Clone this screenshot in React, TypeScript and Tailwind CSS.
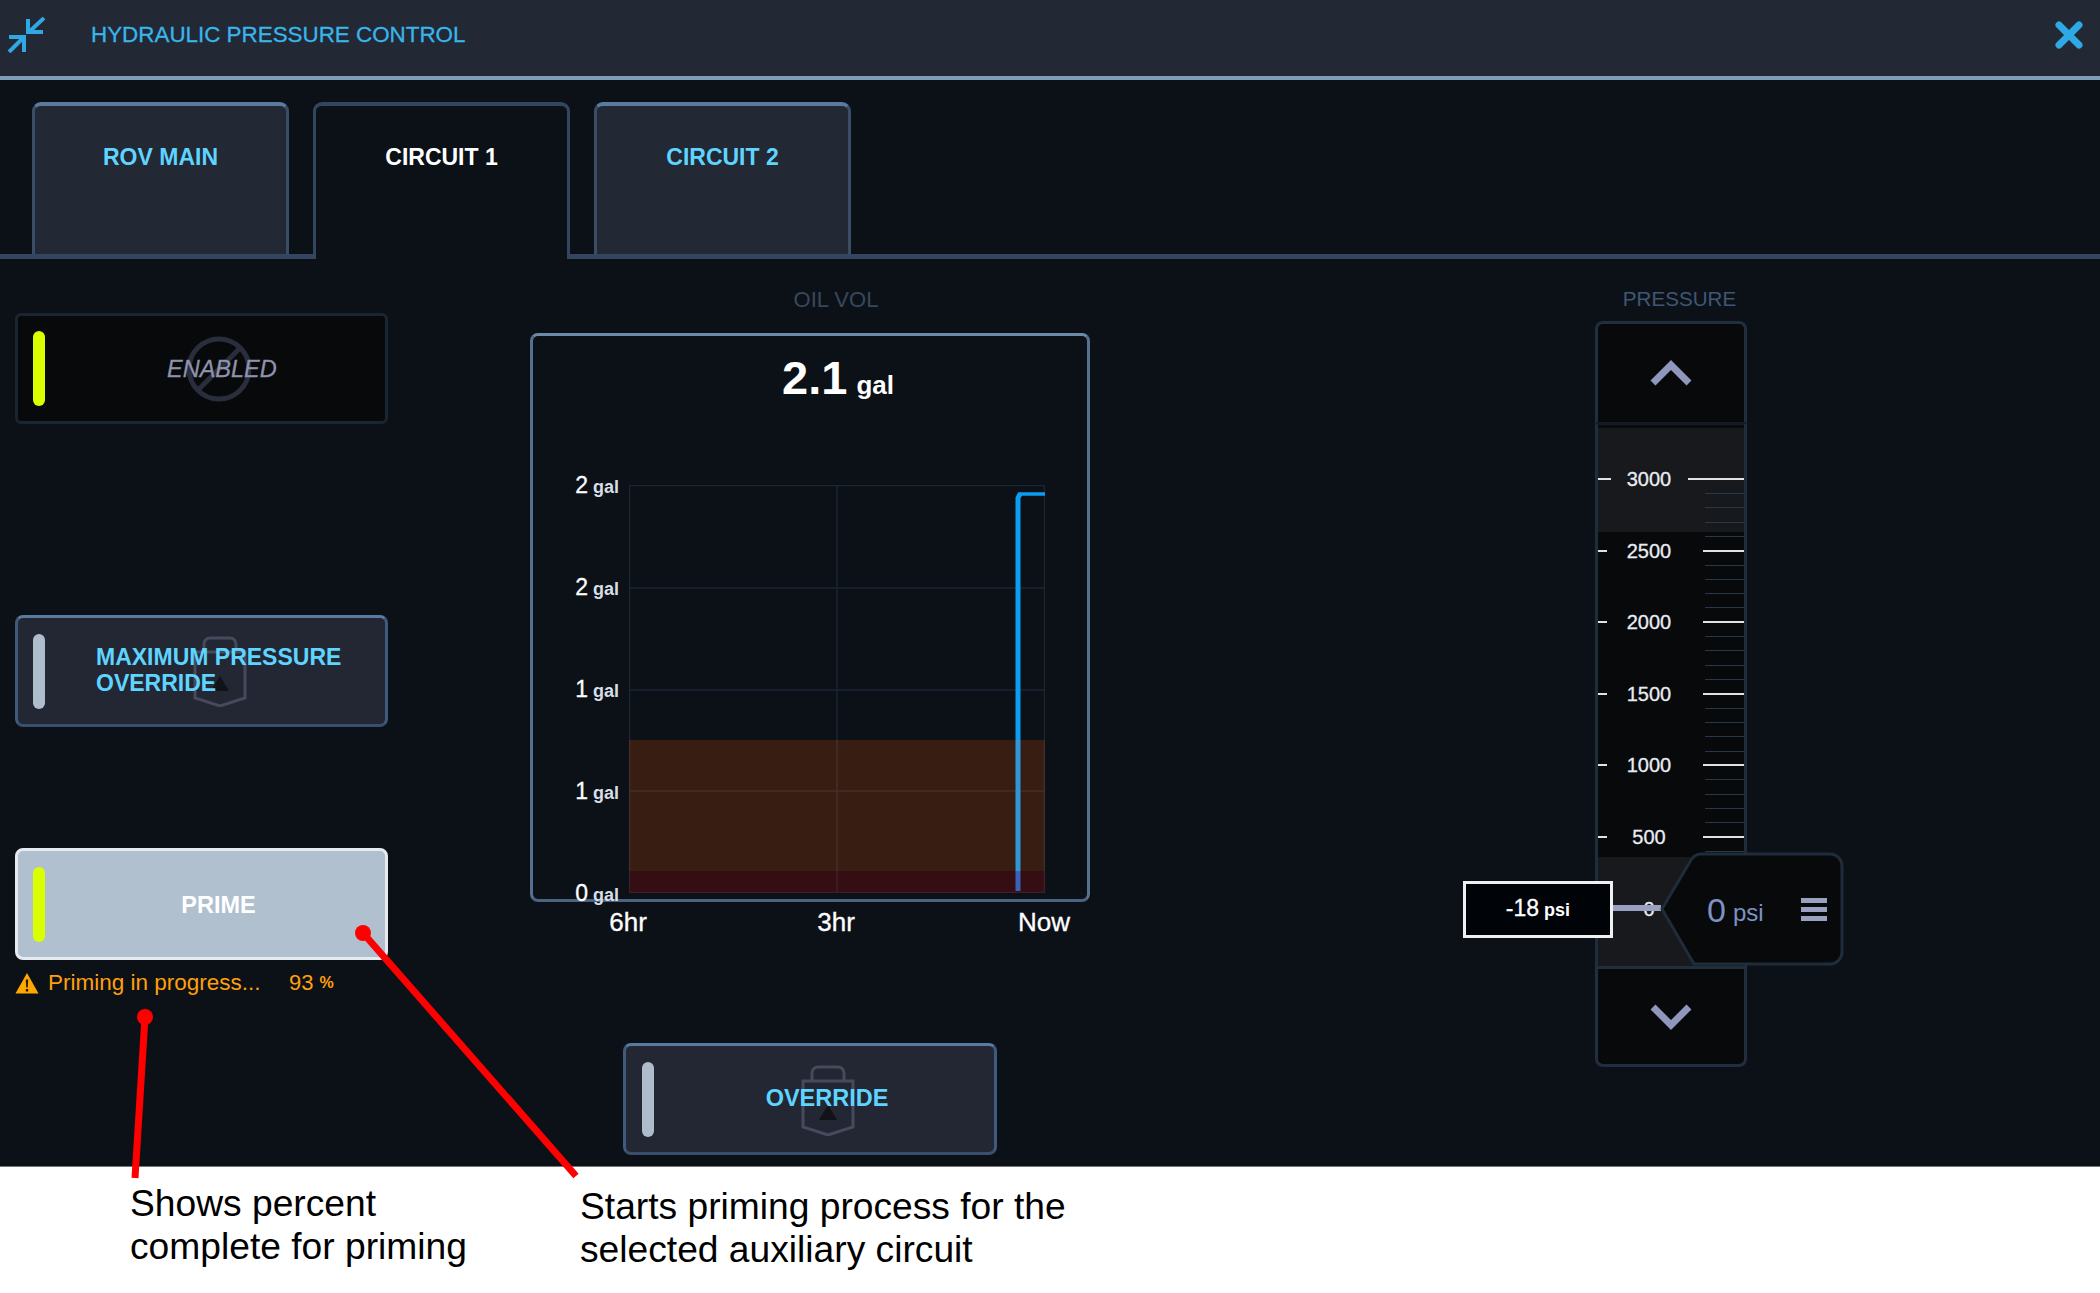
const ticks = Array.from({ length: 31 }, (_, i) => (i % 5 === 0 ? 3000 - i * 100 : null));

// ---------------------------------------------------------------------------
// Shared bits
// ---------------------------------------------------------------------------

function LockIcon({ className }: { className: string }) {
  return (
    <svg className={className} viewBox="0 0 56 72" fill="none">
      <path d="M12 17V9a6 6 0 0 1 6-6h20a6 6 0 0 1 6 6v8" stroke="#464a5c" strokeWidth="3" />
      <path d="M3 17h50v46l-25 8-25-8z" stroke="#464a5c" strokeWidth="3" />
      <path d="M28 41l9 15H19z" fill="#111318" />
    </svg>
  );
}

function Tab({ label, active }: { label: string; active?: boolean }) {
  return active ? (
    <div className="-mb-[5px] h-[157px] w-[257px] rounded-t-[9px] border-x-[3px] border-t-[4px] border-[#34465f] bg-[#0c1118] pt-[39px] text-center text-[23px] font-bold leading-6 text-white">
      {label}
    </div>
  ) : (
    <div className="h-[152px] w-[257px] rounded-t-[9px] border-x-[3px] border-t-[4px] border-x-[#3a4d66] border-t-[#5a7b9e] bg-[#222834] pt-[39px] text-center text-[23px] font-bold leading-6 text-[#5fd4ff]">
      {label}
    </div>
  );
}

function Indicator({ on }: { on?: boolean }) {
  return <div className={`h-[75px] w-3 shrink-0 rounded-full ${on ? 'bg-[#d9ff00]' : 'bg-[#aebccb]'}`} />;
}

// ---------------------------------------------------------------------------
// Left column
// ---------------------------------------------------------------------------

function LeftColumn() {
  return (
    <div className="ml-[15px] w-[373px] shrink-0 pt-[54px]">
      <div className="relative flex h-[111px] items-center rounded-[6px] border-[3px] border-[#1b2431] bg-[#08090b] pl-[15px]">
        <Indicator on />
        <svg className="absolute left-[168px] top-[20px] h-[66px] w-[66px]" viewBox="0 0 66 66" fill="none">
          <circle cx="33" cy="33" r="30" stroke="#292d3c" strokeWidth="5" />
          <path d="M54 12L12 54" stroke="#292d3c" strokeWidth="5" />
        </svg>
        <span className="absolute left-[149px] top-[41px] text-[23.5px] italic leading-6 text-[#8f92ab] [-webkit-text-stroke:0.3px_#8f92ab]">ENABLED</span>
      </div>

      <div className="relative mt-[191px] flex h-[112px] items-center rounded-[8px] border-[3px] border-t-[#587ba0] border-x-[#3f5a7c] border-b-[#3a4f6e] bg-[#222733] pl-[15px]">
        <Indicator />
        <LockIcon className="absolute left-[174px] top-[17px] h-[72px] w-[56px]" />
        <span className="absolute left-[78px] top-[26px] text-[23px] font-bold leading-[26px] text-[#5fd4ff]">
          MAXIMUM PRESSURE
          <br />
          OVERRIDE
        </span>
      </div>

      <div className="relative mt-[121px] flex h-[112px] items-center rounded-[8px] border-[3px] border-[#e6ebf0] bg-[#b0c0cf] pl-[15px]">
        <Indicator on />
        <span className="absolute inset-x-0 top-[42px] pl-[34px] text-center text-[23.5px] font-bold leading-6 text-white">PRIME</span>
      </div>

      <div className="mt-[10px] flex h-[26px] items-center text-[#ff9f0a]">
        <svg className="h-[22px] w-[24px] shrink-0" viewBox="0 0 24 22">
          <path d="M12 1L23.5 21.5H.5z" fill="#ffa800" />
          <path d="M10.8 7.5h2.4l-.4 8h-1.6zM10.8 17h2.4v2.4h-2.4z" fill="#2a1c00" />
        </svg>
        <span className="ml-[9px] w-[241px] text-[22.5px] leading-none">Priming in progress...</span>
        <span className="text-[22px] leading-none">93</span>
        <span className="ml-[6px] text-[16px] font-bold leading-none">%</span>
      </div>
    </div>
  );
}

// ---------------------------------------------------------------------------
// Oil volume chart
// ---------------------------------------------------------------------------

function YLabel({ value }: { value: string }) {
  return (
    <div className="flex h-0 items-center justify-end text-white">
      <span className="text-[23px] [-webkit-text-stroke:0.3px_#ffffff]">{value}</span>
      <span className="ml-[5px] mt-[4px] text-[18px] font-bold text-[#d8dde6]">gal</span>
    </div>
  );
}

function OilChart() {
  return (
    <div className="ml-[142px] w-[560px] shrink-0">
      <div className="mt-[29px] h-[23px] pl-[52px] text-center text-[22px] leading-6 text-[#38475c]">OIL VOL</div>
      <div className="mt-[22px] h-[569px] rounded-[8px] border-[3px] border-t-[#6d8aa8] border-x-[#56718f] border-b-[#4a6380] bg-[#0c1118]">
        <div className="flex h-[149px] items-baseline justify-center pl-[56px] pt-[12px] font-bold leading-[60px] text-white">
          <span className="text-[47px]">2.1</span>
          <span className="ml-[9px] text-[26px]">gal</span>
        </div>
        <div className="flex h-[408px]">
          <div className="flex w-[86px] shrink-0 flex-col justify-between">
            <YLabel value="2" />
            <YLabel value="2" />
            <YLabel value="1" />
            <YLabel value="1" />
            <YLabel value="0" />
          </div>
          <svg className="ml-[10px] h-[408px] w-[416px] shrink-0" viewBox="0 0 416 408" fill="none">
            <path
              d="M0.5 0.5H415.5V407.5H0.5ZM0 103H416M0 205H416M0 306H416M208 0V408"
              stroke="#1a2633"
              strokeWidth="1.5"
            />
            <rect y="255" width="416" height="131" fill="rgba(255,87,2,0.185)" />
            <rect y="386" width="416" height="22" fill="rgba(255,0,0,0.17)" />
            <path d="M389 255V13L391 9" stroke="#0c9cf2" strokeWidth="5" />
            <path d="M389 9H416" stroke="#0c9cf2" strokeWidth="3.5" />
            <path d="M389 386V255" stroke="#2f97d8" strokeWidth="5" />
            <path d="M389 406V386" stroke="#3a62b8" strokeWidth="5" />
          </svg>
        </div>
      </div>
      <div className="ml-[98px] flex h-[40px] w-[416px] items-center justify-between text-[26px] leading-none text-white [-webkit-text-stroke:0.3px_#ffffff]">
        <div className="flex w-0 justify-center">6hr</div>
        <div className="flex w-0 justify-center">3hr</div>
        <div className="flex w-0 justify-center">Now</div>
      </div>
      <div className="relative ml-[93px] mt-[101px] flex h-[112px] w-[374px] items-center rounded-[8px] border-[3px] border-t-[#587ba0] border-x-[#3f5a7c] border-b-[#3a4f6e] bg-[#222733] pl-[16px]">
        <Indicator />
        <LockIcon className="absolute left-[174px] top-[18px] h-[72px] w-[56px]" />
        <span className="absolute inset-x-0 top-[40px] pl-[34px] text-center text-[23.5px] font-bold leading-6 text-[#5fd4ff]">OVERRIDE</span>
      </div>
    </div>
  );
}

// ---------------------------------------------------------------------------
// Pressure gauge
// ---------------------------------------------------------------------------

function Chevron({ up }: { up?: boolean }) {
  return (
    <svg className="h-[26px] w-[42px]" viewBox="0 0 42 26" fill="none">
      <path d={up ? 'M3 23L21 5l18 18' : 'M3 3l18 18L39 3'} stroke="#8f97bd" strokeWidth="7" />
    </svg>
  );
}

function TickRow({ value }: { value: number | null }) {
  if (value === null) {
    return (
      <div className="flex h-[14.32px] items-center justify-end">
        <div className="h-px w-[39px] bg-[#26384a]" />
      </div>
    );
  }
  return (
    <div className="flex h-[14.32px] items-center">
      <div className="w-[13px] shrink-0">
        <div className={`h-[2px] bg-[#dfe3e8] ${value === 3000 ? 'w-[13px]' : 'w-[9px]'}`} />
      </div>
      <div className="w-[76px] shrink-0 text-center text-[20px] leading-none text-[#e8ecf2] [-webkit-text-stroke:0.3px_#e8ecf2]">{value}</div>
      <div className={`ml-auto h-[2px] shrink-0 bg-[#dfe3e8] ${value === 3000 ? 'w-[56px]' : 'w-[41px]'}`} />
    </div>
  );
}

function PressureGauge() {
  return (
    <div className="ml-[505px] w-[152px] shrink-0">
      <div className="mt-[28px] mb-[10px] h-[24px] whitespace-nowrap pl-[17px] text-center text-[20.6px] leading-6 text-[#3f5674]">PRESSURE</div>
      <div className="flex h-[101px] items-center justify-center rounded-t-[8px] border-[3px] border-b-0 border-[#212e3d] bg-[#08090b]">
        <Chevron up />
      </div>
      <div className="relative h-[544px] border-x-[3px] border-x-[#1f2c3a] border-t-[3px] border-t-[#141a21] bg-[linear-gradient(#0a0b0d_3px,#17191d_3px,#17191d_107px,#08090b_107px,#08090b_432px,#17191d_432px)] pt-[47px]">
        {ticks.map((value, i) => (
          <TickRow key={i} value={value} />
        ))}

        {/* Setpoint readout */}
        <div className="absolute left-[-135px] top-[456px] flex h-[57px] w-[150px] items-baseline justify-center border-[3px] border-[#eef0f2] bg-[#000308] pt-[12px] leading-6 text-white">
          <span className="text-[23px] [-webkit-text-stroke:0.3px_#ffffff]">-18</span>
          <span className="ml-[5px] text-[18px] font-bold">psi</span>
        </div>
        <div className="absolute left-[15px] top-[480px] h-[6px] w-[48px] bg-[#9aa0bf]" />

        {/* Current value flag */}
        <div className="absolute left-[62px] top-[427px] h-[114px] w-[184px]">
          <svg className="absolute inset-0 h-full w-full" viewBox="0 0 184 114">
            <path
              d="M2 57L31 8q4-6 10-6H170a12 12 0 0 1 12 12V100a12 12 0 0 1-12 12H34z"
              fill="#08090b"
              stroke="#1f2c3a"
              strokeWidth="3"
            />
          </svg>
          <div className="relative flex h-full items-center pl-[47px] pt-[2px]">
            <span className="text-[34px] leading-none text-[#7c93c4]">0</span>
            <span className="ml-[7px] mt-[6px] text-[24px] leading-none text-[#7c93c4]">psi</span>
            <svg className="ml-[37px] h-[24px] w-[26px]" viewBox="0 0 26 24" fill="#9aa0bf">
              <path d="M0 0h26v5H0zM0 9h26v5H0zM0 18h26v5H0z" />
            </svg>
          </div>
        </div>
      </div>
      <div className="flex h-[101px] items-center justify-center rounded-b-[8px] border-[3px] border-[#212e3d] bg-[#08090b]">
        <Chevron />
      </div>
    </div>
  );
}

// ---------------------------------------------------------------------------
// Page
// ---------------------------------------------------------------------------

export default function App() {
  return (
    <div className="relative h-[1293px] w-[2100px] overflow-hidden bg-white font-['Liberation_Sans',Arial,sans-serif]">
      {/* Header */}
      <div className="flex h-[80px] items-center border-b-[4px] border-[#7f9cb8] bg-[#222834] pb-[7px] pl-[7px] pr-[17px]">
        <svg className="h-[36px] w-[38px] shrink-0" viewBox="0 0 38 36" fill="none" stroke="#2fa8e4" strokeWidth="4">
          <path d="M37 1L22 15M21 2V15H36" />
          <path d="M2 35L16 21M2 20H17V35" />
        </svg>
        <div className="ml-[46px] grow text-[22.4px] leading-6 text-[#39b5ea] [-webkit-text-stroke:0.3px_#39b5ea]">HYDRAULIC PRESSURE CONTROL</div>
        <svg className="h-[28px] w-[28px] shrink-0" viewBox="0 0 28 28" fill="none" stroke="#2fa9e6" strokeWidth="7" strokeLinecap="round">
          <path d="M4 4l20 20M24 4L4 24" />
        </svg>
      </div>

      <div className="h-[1086px] bg-[#0c1118]">
        {/* Tabs */}
        <div className="flex h-[179px] items-end gap-[24px] border-b-[5px] border-[#34465f] pl-[32px]">
          <Tab label="ROV MAIN" />
          <Tab label="CIRCUIT 1" active />
          <Tab label="CIRCUIT 2" />
        </div>

        <div className="flex">
          <LeftColumn />
          <OilChart />
          <PressureGauge />
        </div>
      </div>

      {/* Annotations */}
      <div className="flex h-[127px] border-t border-[#777] pl-[130px] pt-[15px] text-[37.2px] leading-[43px] text-black">
        <div className="w-[450px]">
          Shows percent
          <br />
          complete for priming
        </div>
        <div className="pt-[3px]">
          Starts priming process for the
          <br />
          selected auxiliary circuit
        </div>
      </div>

      <svg className="pointer-events-none absolute inset-0 h-[1293px] w-[2100px]" viewBox="0 0 2100 1293" fill="none">
        <path d="M145 1017L135 1178M363 933L576 1176" stroke="#ff0000" strokeWidth="7" />
        <circle cx="145" cy="1017" r="8" fill="#ff0000" />
        <circle cx="363" cy="933" r="8" fill="#ff0000" />
      </svg>
    </div>
  );
}
